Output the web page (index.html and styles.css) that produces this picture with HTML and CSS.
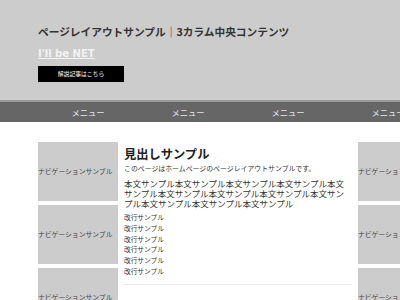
FILE: index.html
```html
<!DOCTYPE html>
<html lang="ja">
<head>
  <meta charset="UTF-8" />
  <meta name="viewport" content="width=device-width, initial-scale=1" />
  <title>ページレイアウトサンプル｜3カラム中央コンテンツ</title>
  <link rel="stylesheet" href="styles.css">
</head>
<body>
  <header class="site-header">
    <h1 class="site-title">ページレイアウトサンプル｜3カラム中央コンテンツ</h1>
    <a class="site-link" href="#">I'll be NET</a>
    <a class="article-btn" href="#">解説記事はこちら</a>
  </header>

  <nav class="global-nav">
    <ul class="menu">
      <li>メニュー</li>
      <li>メニュー</li>
      <li>メニュー</li>
      <li>メニュー</li>
    </ul>
  </nav>

  <div class="columns">
    <aside class="side">
      <div class="side-item">ナビゲーションサンプル</div>
      <div class="side-item">ナビゲーションサンプル</div>
      <div class="side-item">ナビゲーションサンプル</div>
    </aside>

    <main class="main">
      <h2 class="main-title">見出しサンプル</h2>
      <p class="lead">このページはホームページのページレイアウトサンプルです。</p>
      <p class="body-text">本文サンプル本文サンプル本文サンプル本文サンプル本文サンプル本文サンプル本文サンプル本文サンプル本文サンプル本文サンプル本文サンプル本文サンプル</p>
      <p class="breaks">改行サンプル<br>改行サンプル<br>改行サンプル<br>改行サンプル<br>改行サンプル<br>改行サンプル</p>
    </main>

    <aside class="side">
      <div class="side-item">ナビゲーションサンプル</div>
      <div class="side-item">ナビゲーションサンプル</div>
      <div class="side-item">ナビゲーションサンプル</div>
    </aside>
  </div>
</body>
</html>
```

FILE: styles.css
```css
html {
  overflow: hidden;
}

body {
  margin: 0;
  background: #fff;
  color: #333;
  font-family: "Noto Sans CJK JP", "Noto Sans", sans-serif;
}

.site-header {
  background-color: #cccccc;
  padding: 24px 0 18px 38px;
}

.site-title {
  margin: 0;
  font-size: 10.7px;
  line-height: 16px;
  font-weight: 700;
  color: #333;
}

.site-link {
  display: table;
  margin-top: 6px;
  font-family: "DejaVu Sans", sans-serif;
  font-size: 10px;
  line-height: 16px;
  font-weight: 700;
  color: #f2f2f2;
}

.article-btn {
  display: block;
  width: 86px;
  height: 16px;
  margin-top: 4px;
  background-color: #000;
  color: #fff;
  font-size: 5.8px;
  line-height: 16px;
  text-align: center;
  text-decoration: none;
}

.global-nav {
  background-color: #666;
  border-top: 2px solid #999;
}

.menu {
  list-style: none;
  margin: 0 0 0 38px;
  padding: 0;
  display: flex;
  width: 400px;
}

.menu li {
  flex: 0 0 100px;
  height: 20px;
  line-height: 20px;
  text-align: center;
  color: #e6e6e6;
  font-size: 8.3px;
}

.columns {
  display: grid;
  grid-template-columns: 80px 228px 80px;
  column-gap: 6px;
  width: 400px;
  margin: 20px 0 0 38px;
}

.side {
  display: flex;
  flex-direction: column;
  gap: 4px;
}

.side-item {
  height: 59px;
  line-height: 59px;
  background-color: #cccccc;
  color: #444;
  font-size: 6.8px;
  white-space: nowrap;
}

.main {
  padding-top: 4px;
}

.main-title {
  margin: 0;
  font-size: 12.3px;
  line-height: 16px;
  font-weight: 700;
  color: #222;
}

.lead {
  margin: 1px 0 0;
  font-size: 6.9px;
  line-height: 10px;
}

.body-text {
  margin: 5px 0 4px;
  font-size: 8.5px;
  line-height: 10px;
}

.breaks {
  margin: 0;
  padding-bottom: 7px;
  border-bottom: 1px solid #e8e8e8;
  font-size: 6.7px;
  line-height: 10.8px;
}
```
